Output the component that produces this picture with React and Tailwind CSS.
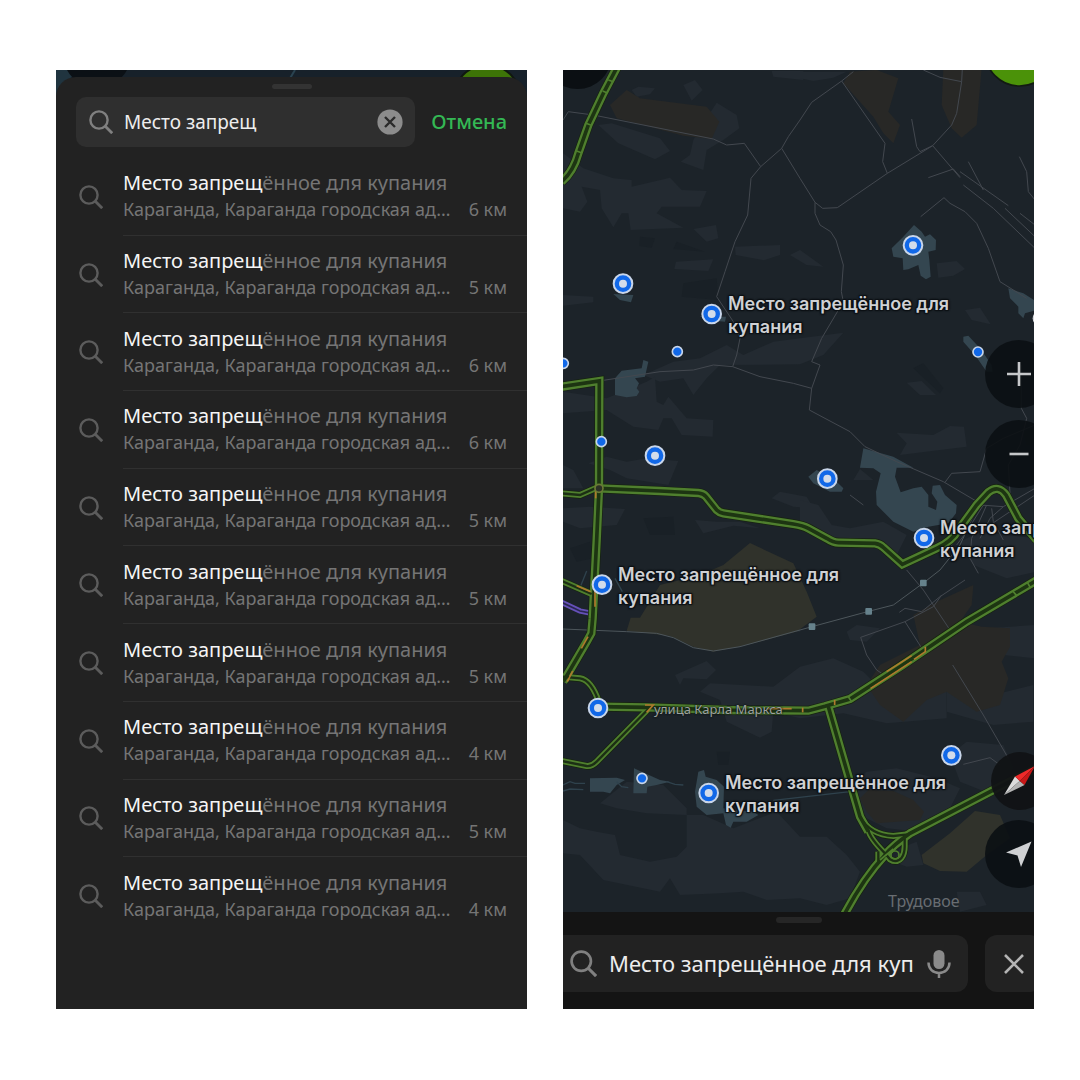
import React from 'react';

const distances = [6, 5, 6, 6, 5, 5, 5, 4, 5, 4];

const labels = [
    { id: 'north', x: 165, y: 222 },
    { id: 'east', x: 377, y: 446 },
    { id: 'center', x: 55, y: 493 },
    { id: 'south', x: 162, y: 701 },
];

// Map drawing units: three per pixel
const pins = [
    [189, 656], [455, 747], [1059, 541], [285, 1172], [802, 1241],
    [1092, 1419], [126, 1559], [114, 1929], [1174, 2071], [446, 2184],
];
const dots = [[352, 860], [1254, 861], [10, 895], [124, 1130], [246, 2140]];
const stations = [[756, 1685], [926, 1639], [1090, 1554]];

const light = [
    // north west
    'M215 75 235 65 285 70 270 88 230 95Z',
    'M370 60 405 45 428 75 395 107Z',
    'M115 180 155 175 300 220 330 258 285 283 175 235Z',
    'M440 160 470 113 530 150 538 190 490 225 440 255 430 315 362 290 390 270 400 225Z',
    'M9 265 70 310 160 340 215 345 215 365 330 338 365 375 440 378 420 425 305 425 290 445 370 488 212 495 205 445 185 445 160 487 125 430 120 375 65 365 82 410 60 440 9 430Z',
    'M400 492 468 480 475 520 440 530Z',
    'M525 545 660 540 660 570 612 586 527 570Z',
    'M348 590 460 583 445 618 343 612Z',
    'M9 690 100 695 100 712 9 722Z',
    'M635 18 730 18 730 45 640 35Z',
    // north east
    'M720 20 860 20 820 38 760 48 720 40Z',
    'M720 555 790 605 740 600 690 570Z',
    'M1130 595 1190 588 1215 612 1180 632 1135 638Z',
    'M1215 735 1260 728 1292 778 1235 765Z',
    'M1040 953 1085 948 1128 990 1080 990Z',
    // middle
    'M250 930 340 890 420 880 500 840 550 870 640 830 720 820 850 803 790 870 720 898 480 900 440 940 400 990 370 940 300 950Z',
    'M9 980 140 1000 260 950 285 935 290 1010 310 1020 325 995 380 1060 460 1065 458 1115 365 1110 335 1060 310 1060 295 1095 220 1085 140 1035 9 1045Z',
    'M85 1195 140 1175 200 1190 260 1180 355 1188 325 1260 200 1240 150 1215Z',
    'M9 1200 40 1215 70 1270 9 1270Z',
    'M9 1330 90 1325 195 1332 170 1380 60 1390 9 1370Z',
    'M635 1300 660 1280 740 1295 760 1330 700 1325Z',
    'M405 1365 470 1370 540 1370 600 1390 520 1382 430 1405Z',
    'M1010 1103 1120 1110 1170 1083 1212 1085 1220 1145 1140 1155 1020 1170 1040 1135Z',
    'M880 1245 900 1212 940 1245Z',
    'M720 1305 775 1320 815 1380 870 1390 970 1370 1040 1410 1010 1470 960 1430 830 1425 720 1370Z',
    'M1200 1430 1260 1400 1430 1420 1430 1520 1340 1540 1240 1500Z',
    // south middle
    'M345 1830 440 1788 468 1815 440 1843 370 1840 360 1860Z',
    'M420 1880 450 1855 640 1865 720 1805 820 1780 910 1820 950 1860 1090 1850 1160 1880 1160 1960 980 1975 850 1945 720 1960 640 1940 635 2000 600 2018 500 1970 480 1905Z',
    'M605 1690 650 1656 720 1670 720 1700 640 1705Z',
    'M860 1700 890 1680 960 1690 920 1730 870 1725Z',
    'M1160 1870 1300 1890 1420 1860 1420 1970 1300 1980 1160 1940Z',
    'M1280 1690 1425 1680 1425 1780 1330 1770Z',
    'M1170 2070 1220 2030 1330 2040 1360 2110 1300 2190 1200 2150Z',
    // south
    'M120 2215 200 2150 310 2160 380 2230 380 2345 350 2375 270 2390 180 2370 165 2310 110 2300 60 2290 9 2265 9 2365 60 2370 130 2445 300 2480 330 2440 360 2490 480 2485 550 2480 620 2505 720 2500 800 2520 870 2500 900 2420 860 2370 800 2315 720 2315 650 2240 520 2290 430 2250 380 2250 260 2245 170 2230Z',
    'M860 2170 920 2120 1010 2110 1130 2140 1200 2170 1170 2230 1080 2300 980 2290 900 2250Z',
    'M1020 2350 1070 2330 1090 2400 1040 2405 1000 2390Z',
    'M1190 2480 1260 2480 1280 2520 1200 2540Z',
];

const brown = [
    'M150 120 200 75 240 100 440 125 478 170 455 222 370 212 170 160Z',
    'M870 20 950 15 1015 40 985 140 1020 180 1000 235 970 205 940 155 850 55Z',
    'M1150 10 1265 10 1250 180 1205 218 1175 190 1145 120Z',
    'M1060 1650 1130 1610 1240 1560 1235 1620 1200 1670 1265 1685 1350 1690 1350 1745 1325 1790 1345 1840 1320 1920 1250 1940 1160 1880 1100 1905 1030 1970 960 1920 920 1860 960 1800 1080 1740Z',
    'M920 2240 900 2200 925 2175 1000 2178 1060 2205 1092 2240 1080 2265 950 2275Z',
];

const park = [
    'M200 1697 212 1658 240 1658 300 1560 420 1530 490 1500 570 1434 700 1495 740 1580 770 1655 710 1700 560 1740 460 1760 400 1745 330 1713Z',
    'M1085 2370 1170 2305 1245 2238 1320 2250 1350 2320 1280 2370 1220 2420 1140 2418 1090 2395Z',
];

const shade = [
    'M240 515 285 520 275 548 238 543Z',
    'M350 530 435 560 340 552Z',
    'M370 655 470 640 475 705 365 695Z',
    'M1060 910 1090 895 1150 970 1140 985Z',
    'M250 1360 340 1355 345 1410 270 1410Z',
    'M30 1450 90 1430 100 1480 50 1490Z',
    'M1390 1100 1430 1090 1430 1140 1400 1140Z',
    'M470 2060 510 2060 505 2100 475 2100Z',
];

const water = [
    // lakes under the northern pins
    'M1062 480 1085 500 1095 515 1110 508 1128 525 1127 555 1105 560 1108 585 1112 635 1098 643 1082 632 1075 600 1045 613 1030 615 1028 580 1000 575 995 550 1030 515Z',
    'M160 687 220 690 213 712 180 705Z',
    'M440 745 470 755 498 755 495 770 470 768 420 755Z',
    'M165 940 185 917 245 910 250 885 265 890 255 935 225 940 237 955 230 970 238 980 230 993 200 997 165 990Z',
    'M1345 670 1390 685 1430 710 1430 735 1395 745 1390 760 1375 745 1375 725 1350 700Z',
    'M1210 815 1225 812 1260 850 1295 900 1298 920 1280 920 1245 870 1210 830Z',
    'M745 1235 770 1215 830 1250 850 1270 845 1280 810 1280 760 1255Z',
    // reservoir
    'M910 1150 1000 1175 1060 1208 1010 1208 1005 1235 1022 1282 1060 1270 1085 1265 1105 1290 1105 1325 1128 1335 1132 1310 1115 1285 1118 1262 1140 1260 1155 1290 1190 1320 1188 1345 1165 1375 1105 1385 1060 1400 1000 1370 950 1320 948 1280 962 1225 940 1210 900 1208Z',
    // southern ponds
    'M90 2140 170 2138 195 2145 170 2160 150 2185 130 2180 90 2180Z',
    'M222 2110 245 2120 300 2145 330 2150 290 2160 262 2165 260 2185 220 2185Z',
    'M415 2120 432 2115 437 2135 470 2145 492 2165 490 2230 580 2240 595 2250 560 2270 520 2270 512 2288 498 2280 490 2245 440 2250 410 2225 405 2180Z',
];

const streams = [
    'M9 2160 30 2150 45 2155 75 2155',
    'M9 2178 30 2172 70 2174',
    'M170 2150 185 2165 205 2168',
    'M320 2150 345 2158 370 2160',
    'M62 1563 80 1518',
    'M165 1540 187 1580',
    'M640 2206 870 2180',
];

const paths = [
    'M9 165 25 140 100 150 460 222 500 240 553 235 602 305 573 340 563 450 525 530 495 620 470 695 520 770 540 820 530 870 518 905',
    'M602 305 665 250 685 215 720 165 755 112 845 48 880 20',
    'M665 250 720 340 765 412 788 430 832 428 982 325 1118 242 1175 180 1190 145 1205 50 1207 10',
    'M845 48 975 235 968 290 982 325',
    'M1090 15 1140 37 1205 50',
    'M1055 162 1070 245 1080 260 1118 242 1200 338',
    'M765 412 765 445 780 480 812 500 828 525 850 600 844 680 850 710 785 820 755 890 780 900 755 970 748 1035 870 1100 915 1145 1010 1190 1150 1250 1260 1315',
    'M130 946 300 920 400 915 460 900 518 905 600 935 700 955 755 970',
    'M1082 455 1152 398 1170 415 1215 440 1250 475 1285 550 1320 650 1400 700',
    'M1105 338 1180 312 1200 335',
    'M1225 290 1270 375',
    'M1200 320 1345 422',
    'M1210 360 1300 430 1425 550',
    'M1335 430 1425 515',
    'M1378 275 1400 320 1405 380 1425 405',
    'M1380 445 1425 480',
    'M870 1290 910 1320',
    'M1155 1252 1175 1225 1260 1220 1280 1150 1330 1120 1425 1080',
    'M1384 900 1384 1030 1400 1060 1380 1140 1345 1200 1350 1285',
    'M1040 1515 1090 1575 1170 1695',
    'M1018 1642 1035 1630 1085 1640 1140 1595 1215 1545',
    'M965 1825 950 1815 920 1770 902 1717 1035 1670 1120 1625 1145 1590',
    'M1035 1670 1095 1765',
    'M1178 1800 1270 1950 1345 2080',
    'M1210 2098 1290 2078 1320 2100',
    'M1260 1320 1200 1400 1150 1480',
    'M1270 1320 1220 1400 1190 1440',
    'M1280 1320 1235 1420 1230 1480 1255 1525',
    'M1260 1320 1330 1325 1425 1270',
    'M1330 1325 1290 1360 1260 1420',
    'M1260 1400 1350 1340 1425 1290',
    'M1295 1330 1300 1370 1330 1425',
];

const railway = 'M9 1692 200 1700 290 1705 340 1718 400 1748 460 1758 540 1745 756 1685 926 1639 1000 1620 1090 1554 1140 1515 1200 1440 1255 1320';

const roads = [
    'M172 5 130 85 85 180 55 265Q40 320 5 350',
    'M5 965 118 948 117 1270 110 1425 98 1660 94 1705 80 1730 10 1850',
    'M117 1270 300 1278 415 1284Q430 1285 438 1295L470 1335Q478 1343 490 1345L700 1377Q730 1382 745 1390L800 1420Q820 1433 835 1433L945 1435Q960 1437 970 1447L1027 1498 1130 1450Q1175 1430 1195 1395L1250 1320 1285 1282Q1315 1258 1338 1290L1375 1360 1430 1425',
    'M118 1925 260 1927 500 1935 745 1937 795 1924 870 1902 1020 1805 1220 1670 1440 1540',
    'M805 1925 900 2255 925 2300',
    'M1440 2105 1300 2175 1050 2305Q1000 2340 975 2370Q910 2440 852 2550',
];

const thinRoads = [
    'M5 1285 60 1290 110 1268',
    'M5 1548 95 1587',
    'M5 1835 60 1840Q95 1845 118 1915',
    'M265 1932 110 2090Q95 2105 80 2103L5 2088',
    'M900 2255Q930 2310 1000 2313L1045 2308',
    'M925 2295Q930 2320 975 2365L990 2383Q1010 2395 1025 2378 1034 2365 1034 2345V2320',
    'M955 2390V2360',
];

const jams = [
    'M107 1262V1300', 'M50 1562 92 1580', 'M105 1560V1625', 'M84 1715 64 1750', 'M38 1818 22 1850',
    'M255 1920H280L260 1942', 'M620 1931H695', 'M728 1928V1942', 'M824 1905V1920',
    'M932 1870 1055 1790', 'M980 1820 1055 1772', 'M1062 1783 1096 1760V1745',
];

function SearchIcon({ className }) {
    return (
        <svg viewBox="0 0 24 24" fill="none" stroke="currentColor" strokeWidth="2.4" className={className} aria-hidden="true">
            <circle cx="10" cy="10" r="8.6" />
            <path d="M16 16 23.200 23.200" strokeWidth="2.8" />
        </svg>
    );
}

function ResultRow({ distance }) {
    return (
        <li className="flex items-center pl-[23px] [&:last-child>a]:border-transparent">
            <SearchIcon className="w-6 h-6 shrink-0 text-[#5c5c5c]" />
            <a href="#result" className="ml-5 flex h-full min-w-0 flex-1 flex-col justify-center border-b border-[#303030] pr-5">
                <span className="truncate text-[20px] leading-[26px] text-[#757575]">
                    <span className="text-[#f5f5f5]">Место запрещ</span>ённое для купания
                </span>
                <span className="flex justify-between gap-4 text-[18px] leading-[26px] text-[#757575]">
                    <span className="truncate">Караганда, Караганда городская ад…</span>
                    <span className="shrink-0">{distance} км</span>
                </span>
            </a>
        </li>
    );
}

function SearchPanel() {
    return (
        <section className="relative min-w-0 flex-1 overflow-hidden bg-[#17212a] pt-[7px]">
            {/* Strip of the map that stays visible above the sheet */}
            <svg className="absolute inset-x-0 top-0 h-7 w-full" viewBox="0 0 471 28" preserveAspectRatio="xMidYMin slice" aria-hidden="true">
                <path d="M0 0H24L12 10 0 28Z" fill="#20343f" />
                <circle cx="41" cy="-16" r="34" fill="#0b1015" />
                <path d="M239 0 233 10" stroke="#2a4350" strokeWidth="2" />
                <circle cx="431" cy="29" r="34" fill="#3d7407" stroke="#10180f" strokeWidth="2" />
            </svg>
            <div className="relative rounded-t-[20px] bg-[#222222] pt-[7px] pb-[74px]">
                <div className="mx-auto h-[5px] w-10 rounded-full bg-[#333333]" />
                <form className="mt-2 flex items-center gap-4 px-5" onSubmit={(e) => e.preventDefault()}>
                    <div className="flex h-[50px] min-w-0 flex-1 items-center gap-[11px] rounded-[10px] bg-[#2f2f2f] pr-3 pl-[13px]">
                        <SearchIcon className="w-6 h-6 shrink-0 text-[#808080]" />
                        <input type="text" aria-label="Поиск" defaultValue="Место запрещ" className="min-w-0 flex-1 bg-transparent text-[19px] text-[#ededed] outline-none" />
                        <button type="button" aria-label="Очистить" className="shrink-0">
                            <svg viewBox="0 0 26 26" className="h-[26px] w-[26px]" aria-hidden="true">
                                <circle cx="13" cy="13" r="12.600" fill="#8c8c8c" />
                                <path d="M8 8 18 18M18 8 8 18" stroke="#2b2b2b" strokeWidth="2.4" />
                            </svg>
                        </button>
                    </div>
                    <button type="button" className="shrink-0 text-[20px] font-medium text-[#34b854]">Отмена</button>
                </form>
                <ul className="mt-[11px] grid h-[777px] auto-rows-fr">
                    {distances.map((distance, i) => (
                        <ResultRow key={i} distance={distance} />
                    ))}
                </ul>
            </div>
        </section>
    );
}

function MapDrawing() {
    return (
        <svg className="absolute inset-0 h-full w-full" viewBox="9 15 1413 2526" preserveAspectRatio="xMinYMin slice" fill="none" aria-hidden="true">
            <rect x="0" y="0" width="1440" height="2560" fill="#1c2329" />
            {light.map((d) => <path key={d} d={d} fill="#232a31" />)}
            {brown.map((d) => <path key={d} d={d} fill="#282826" />)}
            {park.map((d) => <path key={d} d={d} fill="#30322b" />)}
            {shade.map((d) => <path key={d} d={d} fill="#192026" />)}
            {water.map((d) => <path key={d} d={d} fill="#344650" />)}
            <g stroke="#2f424d" strokeWidth="4">
                {streams.map((d) => <path key={d} d={d} />)}
            </g>
            <g stroke="#43484f" strokeWidth="3" strokeLinejoin="round">
                {paths.map((d) => <path key={d} d={d} />)}
            </g>
            <path d={railway} stroke="#4d565b" strokeWidth="3" />
            {stations.map(([x, y]) => <rect key={x} x={x - 10} y={y - 10} width="20" height="20" rx="3" fill="#66828c" />)}

            <path d="M5 1612 60 1638 100 1646" stroke="#6550b8" strokeWidth="16" />
            <path d="M5 1612 60 1638 100 1646" stroke="#292750" strokeWidth="5" />

            <g strokeLinejoin="miter">
                {thinRoads.map((d) => <path key={d} d={d} stroke="#16230f" strokeWidth="22" />)}
                {roads.map((d) => <path key={d} d={d} stroke="#16230f" strokeWidth="29" />)}
                {thinRoads.map((d) => <path key={d} d={d} stroke="#4f7f2e" strokeWidth="18" />)}
                {roads.map((d) => <path key={d} d={d} stroke="#4f7f2e" strokeWidth="25" />)}
                {thinRoads.map((d) => <path key={d} d={d} stroke="#1c2f14" strokeWidth="7" />)}
                {roads.map((d) => <path key={d} d={d} stroke="#1d3512" strokeWidth="11" />)}
            </g>
            <path d="M50 258 66 264M78 175 92 180M128 78 142 84M145 45 160 50M1358 1578 1370 1592M1402 1552 1410 1566M865 1895 875 1910" stroke="#4f7f2e" strokeWidth="5" />
            <circle cx="1005" cy="2370" r="12" stroke="#4f7f2e" strokeWidth="5" />
            <path d="M960 2385 1000 2352" stroke="#4f7f2e" strokeWidth="5" />
            <g stroke="#b07a2c" strokeWidth="5">
                {jams.map((d) => <path key={d} d={d} />)}
            </g>
            <circle cx="117" cy="1270" r="12" fill="#2c3126" stroke="#6a7a35" strokeWidth="5" />

            {dots.map(([x, y]) => (
                <circle key={x} cx={x} cy={y} r="15" fill="#1168e8" stroke="#c9d6ea" strokeWidth="5" />
            ))}
            {pins.map(([x, y]) => (
                <g key={x}>
                    <circle cx={x} cy={y} r="28" fill="#1168e8" stroke="#c9d6ea" strokeWidth="6" />
                    <circle cx={x} cy={y} r="12" fill="#d3dcea" />
                </g>
            ))}
            <circle cx="1440" cy="760" r="22" fill="#d5d8dc" />
            <circle cx="53" cy="-30" r="102" fill="#0b0f13" />
            <circle cx="1379" cy="-41" r="104" fill="#4b9209" stroke="#121a12" strokeWidth="5" />
        </svg>
    );
}

function MapPanel() {
    return (
        <section className="flex min-w-0 flex-1 flex-col overflow-hidden bg-[#141414]">
            <div className="relative flex-1 overflow-hidden">
                <MapDrawing />
                {labels.map((label) => (
                    <p
                        key={label.id}
                        style={{ left: label.x, top: label.y }}
                        className="absolute font-[Inter,sans-serif] text-[18px] font-semibold leading-[23px] whitespace-nowrap text-[#cfd1d4] [text-shadow:1px_1px_1px_#0c1014,-1px_-1px_1px_#0c1014,1px_-1px_1px_#0c1014,-1px_1px_1px_#0c1014,0_0_3px_#0c1014]"
                    >
                        Место запрещённое для<br />купания
                    </p>
                ))}
                <p className="absolute top-[630px] left-[91px] text-[13px] leading-[18px] whitespace-nowrap text-[#9da29f] [text-shadow:0_0_2px_#10161a,0_0_2px_#10161a]">улица Карла Маркса</p>
                <p className="absolute top-[821px] left-[325px] text-[16px] leading-5 whitespace-nowrap text-[#686d72]">Трудовое</p>

                <button type="button" aria-label="Приблизить" className="absolute top-[270px] -right-[19px] flex h-[68px] w-[68px] items-center justify-center rounded-full bg-[#0b0f13]/90">
                    <svg viewBox="0 0 24 24" className="h-6 w-6" aria-hidden="true"><path d="M12 0V24M0 12H24" stroke="#c6c8ca" strokeWidth="2.6" /></svg>
                </button>
                <button type="button" aria-label="Отдалить" className="absolute top-[350px] -right-[19px] flex h-[68px] w-[68px] items-center justify-center rounded-full bg-[#0b0f13]/90">
                    <svg viewBox="0 0 24 24" className="h-6 w-6" aria-hidden="true"><path d="M2.500 12H21.500" stroke="#c6c8ca" strokeWidth="2.6" /></svg>
                </button>
                <button type="button" aria-label="Компас" className="absolute top-[682px] -right-[15px] flex h-[58px] w-[58px] items-center justify-center rounded-full bg-[#111315]/95">
                    <svg viewBox="0 0 32 32" className="h-8 w-8" aria-hidden="true">
                        <path d="M0 30 11 11.500 15.800 16Z" fill="#dcdcdc" />
                        <path d="M0 30 15.800 16 20.500 20Z" fill="#b4b4b4" />
                        <path d="M31 1 11 11.500 15.800 16Z" fill="#ee2a2a" />
                        <path d="M31 1 15.800 16 20.500 20Z" fill="#c91818" />
                    </svg>
                </button>
                <button type="button" aria-label="Моё местоположение" className="absolute top-[750px] -right-[19px] flex h-[68px] w-[68px] items-center justify-center rounded-full bg-[#0b0f13]/90">
                    <svg viewBox="0 0 26 26" className="h-[26px] w-[26px]" aria-hidden="true"><path d="M25.500 0.500 0 11.500 11.500 14.500 15 26Z" fill="#cfd1d3" /></svg>
                </button>
            </div>

            <div className="pt-[5px] pb-[17px]">
                <div className="mx-auto h-[6px] w-[46px] rounded-full bg-[#262626]" />
                <form className="mt-3 flex gap-[17px]" onSubmit={(e) => e.preventDefault()}>
                    <div className="flex h-[57px] min-w-0 flex-1 items-center gap-3 rounded-r-[12px] bg-[#222222] pr-[17px] pl-[7px]">
                        <SearchIcon className="h-[27px] w-[27px] shrink-0 text-[#808080]" />
                        <input type="text" aria-label="Поиск на карте" defaultValue="Место запрещённое для куп" className="min-w-0 flex-1 bg-transparent text-[22px] text-[#ededed] outline-none" />
                        <button type="button" aria-label="Голосовой поиск" className="shrink-0">
                            <svg viewBox="0 0 24 30" className="h-[30px] w-6" fill="none" aria-hidden="true">
                                <rect x="6.500" y="1" width="11" height="19" rx="5.500" fill="#8a8a8a" />
                                <path d="M1.500 13.500C1.500 20 6 24 12 24S22.500 20 22.500 13.500M12 24V29" stroke="#8a8a8a" strokeWidth="2.500" />
                            </svg>
                        </button>
                    </div>
                    <button type="button" aria-label="Закрыть" className="-mr-2 flex w-[57px] shrink-0 items-center justify-center rounded-[12px] bg-[#222222]">
                        <svg viewBox="0 0 20 20" className="h-5 w-5" aria-hidden="true"><path d="M1 1 19 19M19 1 1 19" stroke="#b4b4b4" strokeWidth="2.600" /></svg>
                    </button>
                </form>
            </div>
        </section>
    );
}

export default function App() {
    return (
        <main className="flex min-h-screen items-start bg-white pt-[70px] pr-[46px] pb-[71px] pl-14 font-['Noto_Sans',sans-serif]">
            <div className="flex w-full items-stretch gap-9">
                <SearchPanel />
                <MapPanel />
            </div>
        </main>
    );
}
